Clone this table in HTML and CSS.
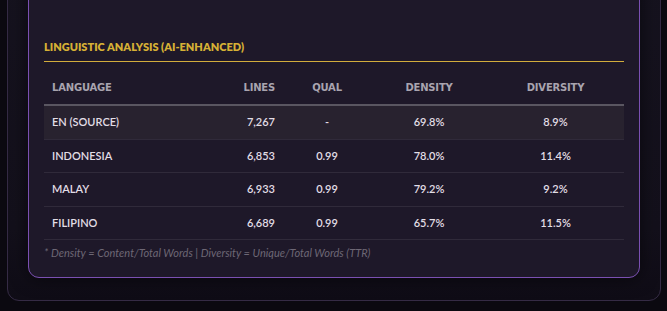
FILE: index.html
```html
<!DOCTYPE html>
<html lang="en">
<head>
<meta charset="utf-8">
<link rel="stylesheet" href="styles.css">
</head>
<body>
<div class="panel">
  <section class="card">
    <h3 class="title">LINGUISTIC ANALYSIS (AI-ENHANCED)</h3>
    <table class="stats">
      <colgroup>
        <col class="c-lang"><col class="c-lines"><col class="c-qual"><col class="c-dens"><col class="c-div">
      </colgroup>
      <thead>
        <tr><th class="left">LANGUAGE</th><th class="right">LINES</th><th>QUAL</th><th>DENSITY</th><th>DIVERSITY</th></tr>
      </thead>
      <tbody>
        <tr class="source"><td class="left">EN (SOURCE)</td><td class="right">7,267</td><td>-</td><td>69.8%</td><td>8.9%</td></tr>
        <tr><td class="left">INDONESIA</td><td class="right">6,853</td><td>0.99</td><td>78.0%</td><td>11.4%</td></tr>
        <tr><td class="left">MALAY</td><td class="right">6,933</td><td>0.99</td><td>79.2%</td><td>9.2%</td></tr>
        <tr><td class="left">FILIPINO</td><td class="right">6,689</td><td>0.99</td><td>65.7%</td><td>11.5%</td></tr>
      </tbody>
    </table>
    <p class="note">* Density = Content/Total Words | Diversity = Unique/Total Words (TTR)</p>
  </section>
</div>
</body>
</html>
```

FILE: styles.css
```css
html, body {
  margin: 0;
  padding: 0;
  background: #0b0910;
  height: 311px;
  overflow: hidden;
}

.panel {
  margin: -60px 6px 0 7px;
  padding: 20px 20px 22px 20px;
  border: 1px solid #352b45;
  border-radius: 12px;
  background: linear-gradient(180deg, #16131f 0%, #13101b 80%, #0f0c16 100%);
}

.card {
  border: 1px solid #7b50b2;
  border-radius: 11px;
  background: #1e1829;
  padding: 78px 15px 18px 15px;
  box-shadow: 0 0 18px rgba(0, 0, 0, 0.55);
  font-family: "Lato", "Liberation Sans", sans-serif;
}

.title {
  margin: 0;
  font-family: "Lato", sans-serif;
  font-size: 11px;
  font-weight: 800;
  line-height: 14px;
  color: #d6b035;
  padding-bottom: 7px;
  border-bottom: 1px solid #d2ac3c;
}

.stats {
  width: 100%;
  margin-top: 10px;
  border-collapse: collapse;
  table-layout: fixed;
}

.c-lang { width: 151px; }
.c-lines { width: 88px; }
.c-qual { width: 88px; }
.c-dens { width: 116px; }
.c-div { width: 137px; }

.stats th {
  font-family: "DejaVu Sans", sans-serif;
  font-size: 10px;
  font-weight: 700;
  color: #a9a4af;
  line-height: 12px;
  padding: 10px 8px;
  text-align: center;
  border-bottom: 2px solid #5a5661;
  letter-spacing: -0.2px;
}

.stats td {
  font-size: 11px;
  font-weight: 600;
  color: #e2dee6;
  line-height: 12.5px;
  padding: 10px 8px;
  text-align: center;
  border-bottom: 1px solid #302a3a;
}

.stats .left { text-align: left; }
.stats .right { text-align: right; }

.stats tr.source td { background: #28222f; }

.note {
  margin: 6px 0 0 0;
  font-size: 11px;
  line-height: 13px;
  font-style: italic;
  font-weight: 400;
  color: #6d6775;
}
```
